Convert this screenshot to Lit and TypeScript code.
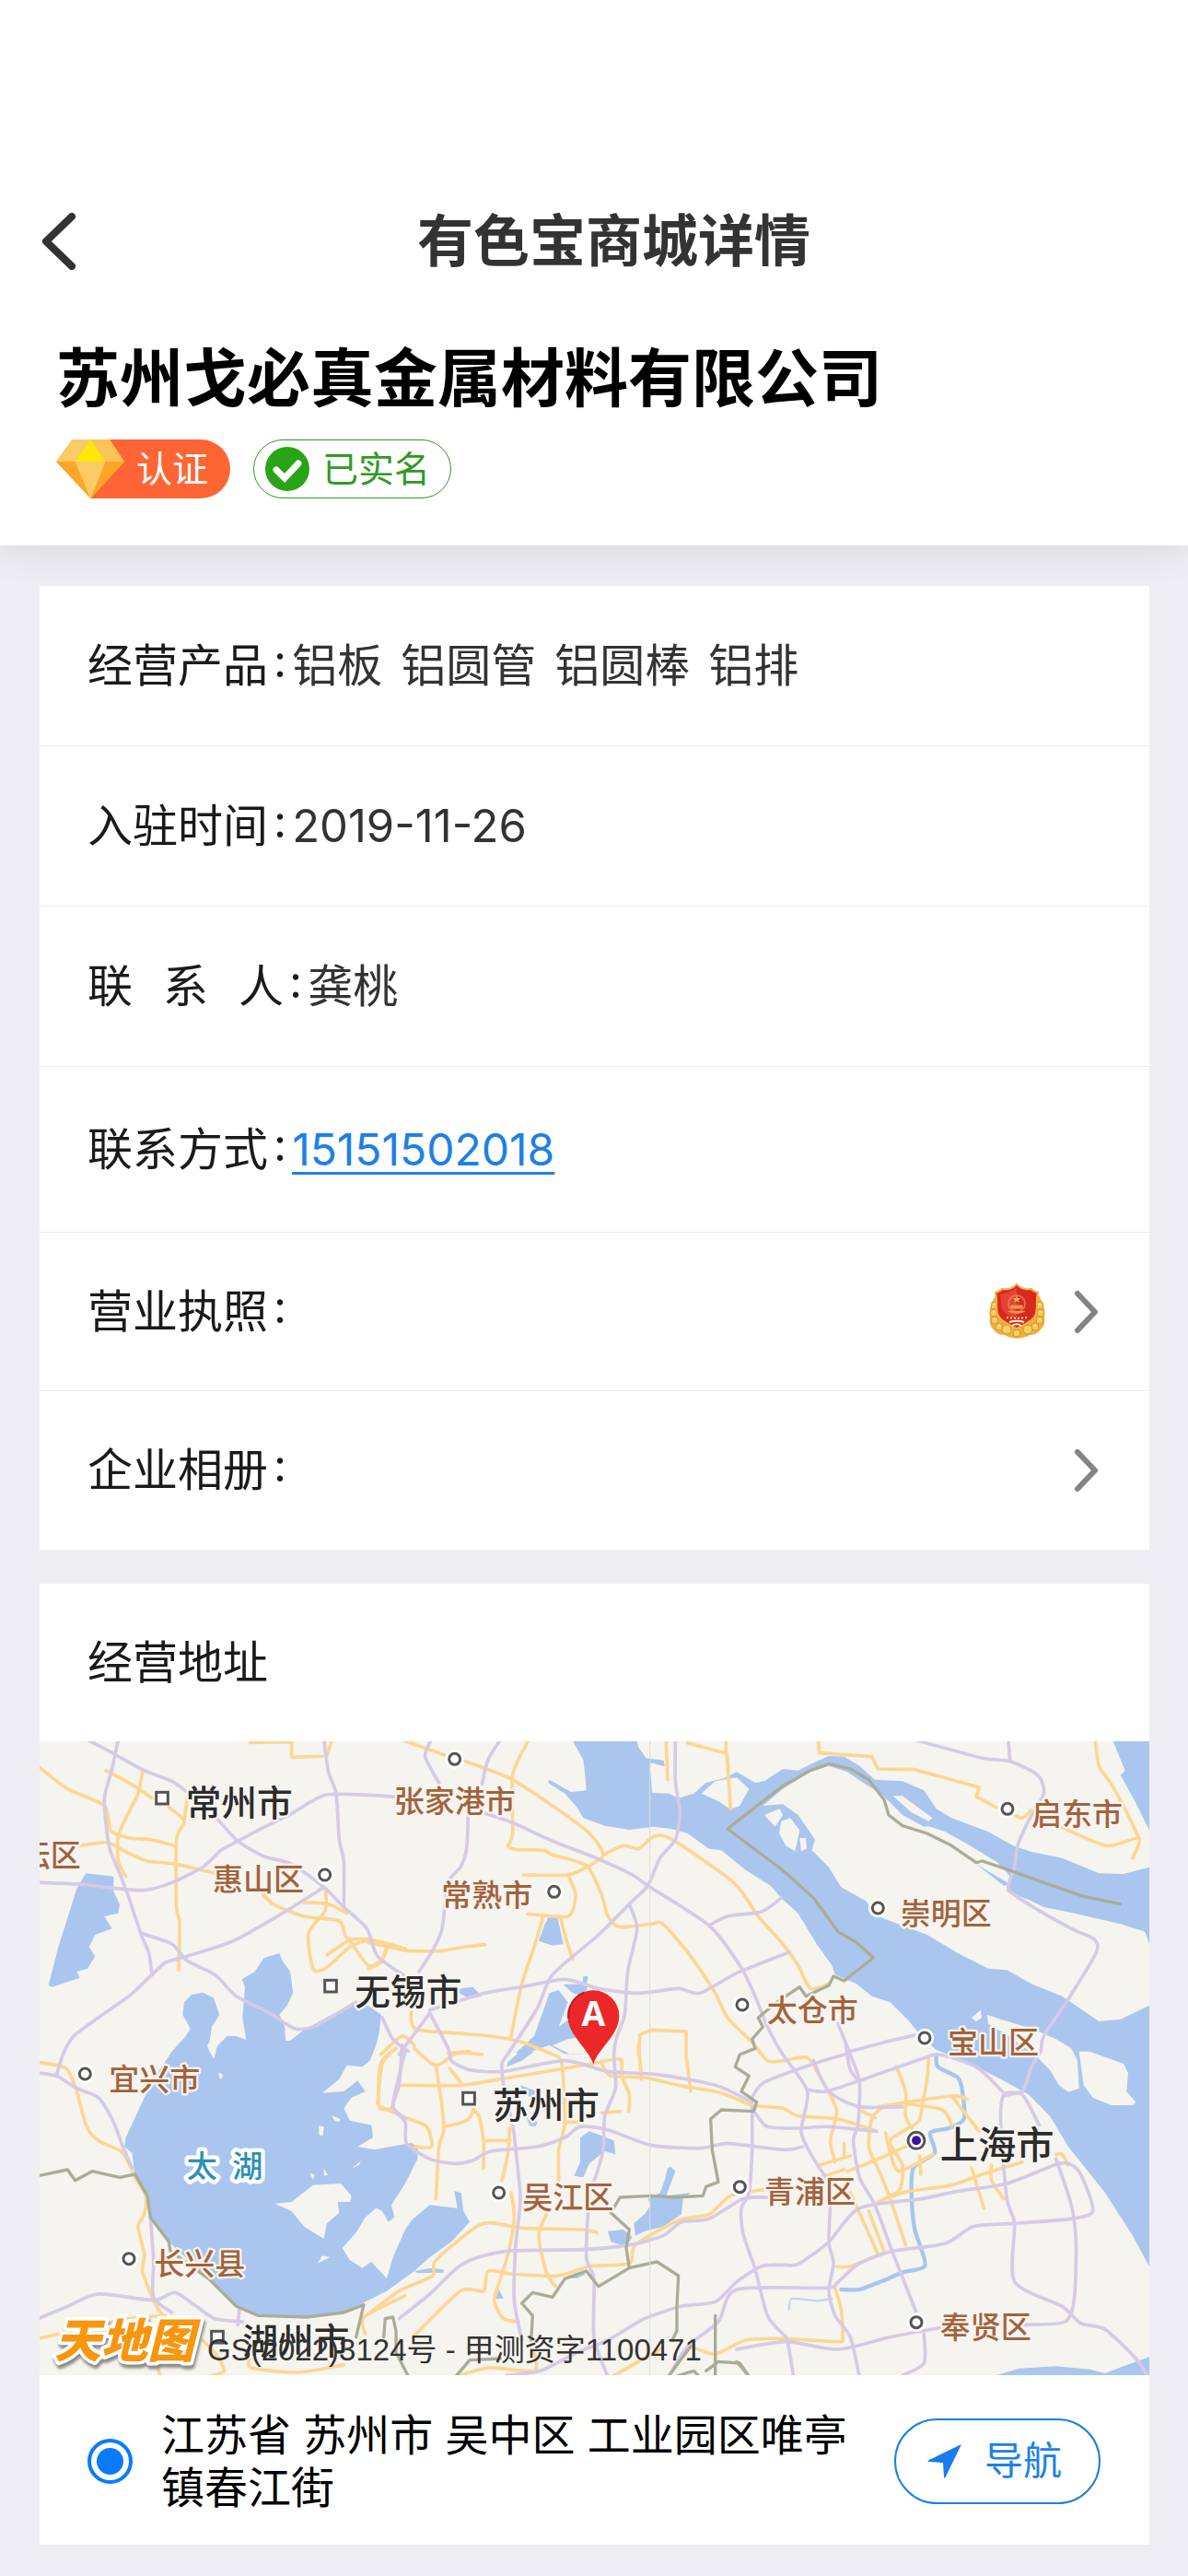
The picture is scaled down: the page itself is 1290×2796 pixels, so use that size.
import { LitElement, html, svg, css } from "lit";
import { customElement } from "lit/decorators.js";

/* ---------- map geometry ---------- */

// The map is stored in six sheets; each sheet has its own origin in the
// 3615 x 2064 drawing space. A letter in a line switches to that sheet.
const SHEETS: Record<string, [number, number]> = {
  a: [-9, -30],
  b: [1071, -30],
  c: [2271, -30],
  d: [-9, 990],
  e: [1071, 990],
  f: [2271, 990],
};

type Point = [number, number];

function parse(line: string): Point[] {
  let origin = SHEETS.a;
  const points: Point[] = [];
  for (const token of line.trim().split(/\s+/)) {
    if (SHEETS[token]) {
      origin = SHEETS[token];
    } else {
      const [x, y] = token.split(",").map(Number);
      points.push([x + origin[0], y + origin[1]]);
    }
  }
  return points;
}

function straight(line: string, close = false): string {
  return "M" + parse(line).map((p) => p.join(" ")).join("L") + (close ? "Z" : "");
}

function curve(line: string): string {
  const p = parse(line);
  let d = `M${p[0][0]} ${p[0][1]}`;
  for (let i = 0; i < p.length - 1; i++) {
    const a = p[i - 1] ?? p[i];
    const b = p[i];
    const c = p[i + 1];
    const e = p[i + 2] ?? c;
    const k = 8;
    d += `C${b[0] + (c[0] - a[0]) / k} ${b[1] + (c[1] - a[1]) / k} ${c[0] - (e[0] - b[0]) / k} ${c[1] - (e[1] - b[1]) / k} ${c[0]} ${c[1]}`;
  }
  return d;
}

const WATER = [
  `d 290,300 350,170 400,80 440,20 a 485,990 500,965 475,920 480,880 505,855 540,848 575,865 595,920 570,960 562,1010 d 555,0 562,20 578,45 585,10 a 590,1020 620,990 650,990 682,1002 670,930 678,830 668,805 710,780 740,735 790,720 800,745 825,780 835,850 815,890 790,920 808,960 810,1005 825,1005 870,970 980,910 1030,880 1070,885 1122,920 1115,980 1105,1020 d 1085,50 1060,70 1010,65 985,110 930,155 1000,150 1045,115 1070,150 1025,170 1000,205 1020,245 1090,260 1095,300 1045,330 1100,340 e 70,330 140,318 162,330 160,370 120,450 75,520 85,560 65,575 45,540 25,530 -10,560 -40,610 -85,660 -60,700 -20,725 10,705 60,760 80,690 120,600 140,570 200,520 290,530 280,475 302,480 310,540 330,575 270,640 200,690 150,735 60,800 0,830 d 1000,870 880,885 720,880 650,850 560,760 430,640 365,550 355,490 320,430 310,350 285,330`,
  "a 160,460 250,470 250,520 270,560 265,590 220,600 245,640 190,660 170,700 190,730 165,770 130,780 140,800 50,830 38,825 70,700 130,510",
  "b 300,835 340,830 370,860 330,868 295,850",
  "b 590,598 615,598 635,690 600,695 555,680 575,625",
  "b 590,850 620,840 650,880 620,960 660,930 700,990 650,1000 600,1020 660,1050 e 720,30 640,28 590,0 b 560,1030 500,1050 480,1045 540,990",
  "b 635,822 720,820 700,860 665,850",
  "b 700,795 715,795 710,830 698,820",
  "e 455,55 500,15 540,20 500,50 450,70",
  "e 690,300 720,280 800,310 805,355 770,345 720,385 700,430 670,425 690,380",
  "e 975,400 985,395 1000,410 985,450 970,490 1050,480 1025,500 1020,550 960,590 900,605 870,620 865,580 900,550 920,520 910,500 950,480 965,440",
  "e 780,605 830,600 860,625 840,655 790,640",
  "e 640,760 680,740 710,745 680,758",
  "e 425,795 440,825 415,825",
  "e 150,735 200,726 245,730 245,740 160,742",
  "e 495,130 550,150 530,170 505,155",
  "e 515,235 552,250 545,265 525,262",
  `b 665,28 700,90 705,130 710,190 660,195 590,155 585,165 640,200 680,245 700,280 770,305 850,318 930,308 985,315 1040,330 1110,380 1150,385 1230,450 1310,500 1345,540 c 200,590 260,690 310,760 320,790 390,820 440,860 500,880 560,940 600,990 650,1035 f 690,30 760,60 860,110 950,160 1020,230 1080,330 1200,480 1290,620 1344,720 c 1344,440 1260,462 1180,460 1060,410 960,390 900,370 820,325 700,280 650,250 610,190 540,160 450,155 400,110 350,80 300,78 250,100 200,125 150,120 90,160 60,165 0,130 b 1160,150 1100,165 1060,200 1010,215 980,200 925,198 918,120 920,100 965,112 962,92 905,85 880,50 875,28`,
  "c 1225,28 1265,125 1250,140 1300,230 1344,320 1344,28",
  "f 835,1078 920,1052 1040,1045 1150,1055 1200,1068 1260,1045 1344,1015 1344,1078",
];

const LAND = [
  "b 1085,200 1130,160 1200,148 1240,185 1210,240 1180,252 1140,225",
  `c 85,240 150,185 240,130 300,110 360,130 420,170 470,200 530,250 620,305 680,325 760,370 850,425 890,470 880,520 950,545 1000,570 1100,590 1250,625 1330,650 1344,690 1344,890 1250,935 1180,942 1060,860 960,820 880,775 820,770 720,720 620,660 540,630 460,600 420,550 340,505 300,440 245,385 255,350 200,270 150,235`,
  "c 90,270 140,250 150,270 125,308",
  "c 145,290 175,280 205,320 190,388 160,370 138,330",
  "c 205,345 225,345 228,380 210,388",
  "c 765,930 795,905 798,930 780,942",
  "c 815,920 860,935 960,965 1040,1000 1090,1030 f 1110,50 1115,140 1080,152 1050,130 1020,80 980,40 c 900,1000 820,950",
  "f 1115,20 1150,20 1260,60 1275,90 1270,150 1300,185 1290,195 1220,195 1160,170 1130,130",
  "d 775,515 830,510 900,455 990,450 1025,490 1020,510 980,510 985,545 945,580 935,630 870,590 830,540",
  "d 915,710 930,685 955,690 935,700",
  "d 960,228 988,240 985,250 970,245",
  "d 918,262 935,265 932,295 920,292",
  "d 1025,402 1055,376 1050,390",
  "d 592,88 606,95 602,110 594,105",
  "d 890,418 905,420 900,438",
  "d 935,402 948,422 935,425",
];

const CHANNELS = [
  "c 475,205 530,235 620,292 660,300 610,308 540,270",
  "c 780,430 890,495 870,500",
];
const SANDBARS = ["c 508,208 540,208 637,280 625,290 570,262"];

const MOTORWAYS = [
  "a 165,25 250,70 350,125 440,160 490,195",
  "a 590,285 655,355 740,405 830,430 935,505 1000,570 1075,640 1110,730 1200,795",
  "a 265,25 245,120 220,220 235,370 270,460 300,540 340,660 365,720 375,790",
  "a 5,490 130,495 250,508 350,515 440,490 540,440 600,385 655,355 720,320 830,265 940,205 1080,205 b 100,212",
  "a 935,25 950,130 975,200 985,350 1000,420 1000,570",
  "a 935,505 800,590 640,680 490,730 420,750 375,790 300,860 200,930 120,990 85,1050 d 65,95",
  "a 340,655 440,690 490,745 580,790 650,860 750,910 840,965 910,955 1040,880",
  "b 45,930 80,1000 130,1040",
  "b 205,25 185,80 230,165",
  "b 430,25 390,90 370,170",
  "b 370,262 470,295 600,355 730,405 860,465 910,500 1110,630 1210,760 1260,860 1300,960 1350,1050 f 230,150 210,280 245,360 290,430",
  "b 325,270 320,380 300,440 260,490 240,640 210,710 165,780",
  "b 1000,25 1000,160 1015,260 1000,350 950,410 910,500 850,560 750,660 600,790 550,900 460,1040 e 435,60 440,130",
  "b 850,560 875,640 845,780 835,920 810,990 800,1050 e 805,140 770,230 765,340 740,430 720,490 710,690 735,760 735,950 780,1080",
  "b 200,905 380,850 500,830 640,805 750,835 880,850 1010,835 1080,850 1200,785 1350,725 c 170,715",
  "b 1110,630 1170,600 1280,585 1345,540",
  "b 200,915 260,1030 e 270,50 330,80 440,85 640,50 780,85 940,95 1130,130 1250,185",
  "b 100,1050 200,915",
  "c 590,28 800,85 890,95 980,140 1000,200 950,290 915,370 905,440 885,510 950,560 1090,640 1165,675 1170,720 1080,870 1000,990 f 990,20 960,70 930,150 870,160 860,260 880,500 905,580 905,770 1060,850 1120,905 1200,925 1300,1020 1340,1080",
  "c 885,25 890,95",
  "c 330,950 370,1050 400,1140 f 395,260 380,310 400,430 450,520 510,680 585,870",
  "c 370,1040 480,1010 590,985",
  "f 355,0 370,80 400,120",
  "d 5,90 65,100 130,140 200,170 250,250 280,330 310,400",
  "d 370,560 380,700 380,820 440,870",
  "d 5,890 100,850 200,810 380,830 450,805 520,850 580,890 670,900",
  "d 1190,0 1180,130 1160,200 1200,240",
  "e 120,20 100,100 80,200 120,250 125,320 200,370 280,385 340,375 400,345 550,330 640,300 690,265 780,275 920,325 1080,335 1170,320 1350,340 f 215,330",
  "e 440,130 470,260 480,340 495,500 480,650 475,830 500,960",
  "e 100,890 200,810 310,710 450,670 700,665 850,650 960,620 1020,575 1110,565 1220,500 1300,495",
  "e 1250,200 1250,340 1240,480 1215,530 1220,610 1260,730 1300,880 1350,940 f 165,960 185,1080",
  "e 450,1075 560,1060 680,1000 780,960 900,890 1020,850 1130,835 1200,770 1280,720 1350,715 f 200,712 300,640 400,530 600,500 720,475 880,450 1050,385 1100,395 1130,440 1160,540 1090,565 900,580 770,590 680,645 510,670 400,710 330,770 290,790 e 1200,795 1140,900 1040,980 980,1075",
  "f 305,520 300,640 315,710 300,800 320,880 370,950 400,1080",
  "f 1040,370 1090,520 1105,640 1100,820 1070,900 940,910",
  "f 0,990 160,965 330,990 500,950 660,920",
  "f 610,940 610,1035 540,1075",
  "f 50,170 90,120 250,60 350,30",
  "f 60,220 100,265 200,270 300,265 455,280",
  "f 230,145 290,150 400,115 600,45 660,30 780,70 865,150",
  "f 250,50 300,150 400,200 540,200",
  "f 870,165 930,160 985,260",
  "d 660,860 655,910",
];

const ROADS = [
  "a 5,112 100,185 220,240 240,320 300,345 370,350 450,370",
  "a 225,125 300,165 375,215",
  "a 345,125 330,200 290,280 265,340 265,420 290,470",
  "a 430,245 480,290 455,350 455,570 465,620 462,775",
  "a 490,215 480,290",
  "a 140,370 230,360 290,390 360,420 455,430 580,460",
  "a 730,520 770,560 870,600 985,615 1010,670 1085,675 1200,705",
  "a 940,510 940,580 885,655 900,770 940,770 1020,700 1085,675",
  "a 945,725 1020,675",
  "a 1020,680 1080,760 1125,740 1140,705",
  "a 870,555 950,560 1010,590",
  "b 0,685 70,700 130,712 240,712 310,700 380,692",
  "b 60,700 40,750 0,770",
  "b 120,30 250,75",
  "b 315,95 460,150 600,240 720,330 765,400 710,440 650,465 505,465",
  "b 520,30 470,140 470,330 455,370 480,382 570,385 600,400 710,435 760,530 780,600 820,635 920,625 960,625 1050,730 1130,850 1170,930 1250,1010 e 1300,50 1350,50 f 230,40 270,100 325,210 305,310 320,380",
  "b 765,400 830,370 880,380 930,340 990,350 1190,490 1270,600 1350,690 c 200,760 240,835 300,820",
  "b 650,465 675,530 650,600 520,592",
  "b 570,600 540,700 500,820 465,990",
  "b 625,600 640,660 665,740",
  "b 140,900 140,940 160,970 280,980 400,990 500,1010 600,1050 e 630,60 640,250 620,340 620,440",
  "b 40,1050 110,990 150,1020",
  "b 260,1045 330,1040",
  "c 905,270 930,280 960,255",
  "c 1060,310 1205,370 1310,345 1290,410",
  "c 1168,28 1180,110 1220,170 1270,260 1310,345",
  "d 5,55 95,75 130,150 160,260 200,310 280,350 320,430 355,490 350,550 330,590 350,680 345,740 390,850 430,900",
  "d 5,955 180,915 300,890 420,880",
  "d 1170,10 1120,60 1115,200 1160,205",
  "d 540,960 580,1000 610,1060 570,1075",
  "d 1200,815 1065,885 1070,940",
  "d 380,960 400,1075",
  "d 690,1020 700,1050 850,1065 1000,1040",
  "e 370,30 290,25 220,65 150,10",
  "e 30,190 45,60 90,10",
  "e 220,65 240,200 245,280 230,330 220,500",
  "e 110,130 300,130 430,110 640,75 730,60",
  "e 265,75 300,120",
  "e 40,200 120,235 190,265 205,330 150,330",
  "e 250,265 320,245 345,210",
  "e 340,210 360,230 375,310 375,400",
  "e 375,310 460,310",
  "e 460,270 455,350 435,440",
  "e 650,250 700,250",
  "e 465,480 475,560 455,680 430,760 410,830 440,890 490,900",
  "e 0,875 100,800 210,750 220,700 370,582 500,595 700,600 745,610",
  "e 150,945 300,800 375,800 390,735 470,745 620,750 720,720 850,710 870,650 1010,570 1110,550 1180,490 1290,470",
  "e 580,550 555,620 580,740 610,785",
  "e 730,60 820,45 825,100 850,160 848,215",
  "e 880,0 890,110",
  "e 760,60 790,100 900,105 1010,130 1150,155 1250,195 1350,205 f 200,230 330,240 455,280",
  "e 760,220 820,215",
  "e 285,1080 390,1050 540,1060 540,1000",
  "e 800,1075 950,990",
  "e 1050,980 1130,1005 1230,960 1350,955 f 330,965 345,950 340,860 320,790",
  "f 520,70 550,150 550,230 570,270",
  "f 625,40 620,110 605,190 590,250 500,310 540,390 530,470 460,510",
  "f 460,200 700,165 750,175",
  "f 550,190 670,210 700,260",
  "f 700,165 790,280",
  "f 475,200 440,240 430,330 460,400 500,500 550,650",
  "f 410,215 450,235",
  "f 270,390 370,360",
  "f 270,430 350,405",
  "f 360,410 450,375 560,325",
  "f 485,285 500,350 530,410 640,355",
  "f 480,500 560,475 700,455 800,420 930,380",
  "f 765,400 805,530",
  "f 830,390 830,440 870,500",
  "f 370,480 460,680",
  "f 430,540 480,670",
  "f 325,720 370,720 480,675",
  "f 350,320 350,360",
  "f 1040,355 1060,355 1080,390",
  "f 595,360 600,420",
];

const ANGLED_ROADS = [
  "a 695,34 830,32 830,82 945,78 960,30",
  "b 970,28 975,155",
  "b 1040,35 1165,70 1165,28",
  "b 1168,70 1180,250",
  "b 880,1050 885,985 920,970 1035,975 1035,1050 e 1050,150",
  "c 265,28 270,68 440,80 460,120 580,122 790,180 780,210 845,245",
];

const BORDERS = [
  "c 1250,560 1130,535 1000,490 860,440 800,420 780,425 700,370 620,330 540,305 495,270 480,220 430,155 370,120 300,103 240,125 150,175 60,245 b 1170,315 1230,360 1350,450 c 250,540 330,650 390,685 445,735 350,810 315,795 300,825 225,860 205,830 130,880 70,930 85,960 50,1000 60,1030 e 1210,30 1195,70 1240,100 1215,150 1265,185 1255,215 1150,210 1115,240 1120,340 1140,445 1100,460 1090,490 1000,495 920,490 820,495 790,545 850,600 840,660 850,725 750,785 710,735 640,760 600,820 535,805 500,840 535,880 530,960",
  "e 850,725 940,705 1010,750 1005,850 1005,930 990,960",
  "e 980,1075 1020,1020 1050,980",
  "e 1010,1075 1060,1060 1075,1075",
  "e 285,1078 330,1025 430,1020",
  "e 50,950 55,890 80,885 90,930 90,1000 130,1078",
  "e 1130,880 1130,1078",
  "e 1100,1060 1140,1030 1210,1035 1240,1078",
  "f 0,1030 40,1078",
  "d 5,425 100,405 125,440 180,410 270,430 320,420 360,490 370,560 430,640 435,670 560,760 650,850 720,880 880,885 1000,870 1065,845 1040,950",
];

const RIVERS = [
  "f 650,30 655,70 720,105 735,150 740,240 690,270 630,285 645,350 575,400 570,500 580,600 600,660 612,720 540,740 480,765 400,795 340,795",
];
const STREAMS = ["f 310,825 260,832 180,825 170,860"];

interface Place {
  at: string;
  name: string;
}

const CITIES: Place[] = [
  { at: "a 485,230", name: "常州市" },
  { at: "a 1036,845", name: "无锡市" },
  { at: "e 405,193", name: "苏州市" },
  { at: "d 670,962", name: "湖州市" },
];

const CAPITALS: Place[] = [{ at: "f 662,323", name: "上海市" }];

const DISTRICTS: Place[] = [
  { at: "b 83,222", name: "张家港市" },
  { at: "b 238,530", name: "常熟市" },
  { at: "a 573,478", name: "惠山区" },
  { at: "a -55,400", name: "坛区" },
  { at: "c 960,265", name: "启东市" },
  { at: "c 533,588", name: "崇明区" },
  { at: "c 98,903", name: "太仓市" },
  { at: "c 687,1008", name: "宝山区" },
  { at: "d 235,108", name: "宜兴市" },
  { at: "d 382,708", name: "长兴县" },
  { at: "e 502,493", name: "吴江区" },
  { at: "f 90,476", name: "青浦区" },
  { at: "f 662,916", name: "奉贤区" },
];

const CITY_DOTS = ["a 408,215", "a 957,827", "e 327,173", "d 588,950"];
const DISTRICT_DOTS = [
  "a 938,465",
  "b 281,88",
  "b 605,520",
  "b 1218,888",
  "c 882,250",
  "c 460,573",
  "c 612,996",
  "d 157,93",
  "d 300,695",
  "e 425,480",
  "e 1210,461",
  "f 585,902",
];

@customElement("area-map")
export class AreaMap extends LitElement {
  static styles = css`
    :host {
      display: block;
      position: relative;
      overflow: hidden;
      background: #f5f4ef;
    }
    .sheet {
      display: block;
      width: 100%;
      height: auto;
    }
    .water {
      fill: #aac6ee;
    }
    .land {
      fill: #f5f4ef;
    }
    .line {
      fill: none;
      stroke-linecap: round;
      stroke-linejoin: round;
    }
    .motorway {
      stroke: #d6cae6;
      stroke-width: 11;
    }
    .road {
      stroke: #fdd692;
      stroke-width: 11;
    }
    .border {
      stroke: #a9ad98;
      stroke-width: 10;
    }
    .river {
      stroke: #a5c6ef;
      stroke-width: 13;
    }
    .stream {
      stroke: #bcd9ee;
      stroke-width: 7;
    }
    .seam {
      stroke: #dcdcda;
      stroke-width: 3;
    }
    .city,
    .capital-name,
    .district,
    .lake {
      font-family: "Noto Sans CJK SC", sans-serif;
      font-weight: 500;
      stroke-linejoin: round;
      paint-order: stroke;
      stroke: #f5f4ef;
      stroke-width: 14;
    }
    .city {
      font-size: 116px;
      fill: #2b2b2b;
    }
    .capital-name {
      font-size: 124px;
      fill: #2b2b2b;
    }
    .district {
      font-size: 99px;
      fill: #a3623c;
    }
    .lake {
      font-size: 99px;
      fill: #2e8fb5;
      stroke: #fff;
      stroke-width: 26;
    }
    .dot {
      fill: #fff;
      stroke: #555;
      stroke-width: 9;
    }
    .halo {
      fill: #fff;
    }
    .capital {
      fill: #3a149a;
    }
    .pin {
      fill: #ec2727;
    }
    .pin-shade {
      fill: none;
      stroke: #b81d1d;
      stroke-width: 6;
    }
    .pin-letter {
      font: 700 112px "Open Sans", sans-serif;
      fill: #fff;
      text-anchor: middle;
    }
    .brand {
      font: italic 900 152px "Noto Sans CJK SC", sans-serif;
      stroke-linejoin: round;
      paint-order: stroke;
      stroke-width: 22;
      fill: #f7960f;
      stroke: #fff;
      filter: drop-shadow(4px 12px 4px #8a8a8a);
    }
    .notice {
      position: absolute;
      left: 182px;
      bottom: 7px;
      font: 33px/40px "Liberation Sans", "Noto Sans CJK SC", sans-serif;
      color: #333;
      white-space: nowrap;
    }
  `;

  private label(place: Place, kind: string, size: number) {
    const [[x, y]] = parse(place.at);
    return svg`<text class=${kind} x=${x} y=${y + Math.round(size * 0.38)}>${place.name}</text>`;
  }

  render() {
    const [[sx, sy]] = parse("f 585,310");
    const [[px, py]] = parse("b 733,925");
    const [[lx, ly]] = parse("d 488,430");
    return html`
      <svg class="sheet" viewBox="0 0 3615 2064" role="img" aria-label="苏州市周边地图">
        ${WATER.map((d) => svg`<path class="water" d=${straight(d, true)} />`)}
        ${LAND.map((d) => svg`<path class="land" d=${straight(d, true)} />`)}
        ${CHANNELS.map((d) => svg`<path class="water" d=${straight(d, true)} />`)}
        ${SANDBARS.map((d) => svg`<path class="land" d=${straight(d, true)} />`)}
        ${STREAMS.map((d) => svg`<path class="line stream" d=${curve(d)} />`)}
        ${RIVERS.map((d) => svg`<path class="line river" d=${curve(d)} />`)}
        ${ROADS.map((d) => svg`<path class="line road" d=${curve(d)} />`)}
        ${ANGLED_ROADS.map((d) => svg`<path class="line road" d=${straight(d)} />`)}
        ${MOTORWAYS.map((d) => svg`<path class="line motorway" d=${curve(d)} />`)}
        ${BORDERS.map((d) => svg`<path class="line border" d=${straight(d)} />`)}
        <path class="seam" d="M1988 0V2064" />
        ${DISTRICT_DOTS.map((d) => {
          const [[x, y]] = parse(d);
          return svg`<circle class="halo" cx=${x} cy=${y} r="31" /><circle class="dot" cx=${x} cy=${y} r="18" />`;
        })}
        ${CITY_DOTS.map((d) => {
          const [[x, y]] = parse(d);
          return svg`<rect class="dot" x=${x - 19} y=${y - 19} width="38" height="38" />`;
        })}
        <circle class="halo" cx=${sx} cy=${sy} r="36" />
        <circle class="dot" cx=${sx} cy=${sy} r="27" />
        <circle class="capital" cx=${sx} cy=${sy} r="15" />
        ${DISTRICTS.map((p) => this.label(p, "district", 99))}
        ${CITIES.map((p) => this.label(p, "city", 116))}
        ${CAPITALS.map((p) => this.label(p, "capital-name", 124))}
        <text class="lake" x=${lx} y=${ly}>太&#8194;湖</text>
        <path
          class="pin"
          d="M${px} ${py + 157}C${px - 12} ${py + 110} ${px - 84} ${py + 62} ${px - 84} ${py}a84 84 0 0 1 168 0C${px + 84} ${py + 62} ${px + 12} ${py + 110} ${px} ${py + 157}Z"
        />
        <path class="pin-shade" d="M${px - 81} ${py + 8}A81 81 0 0 1 ${px - 30} ${py - 77}" />
        <text class="pin-letter" x=${px} y=${py + 32}>A</text>
        <text class="brand" x="48" y="2008">天地图</text>
      </svg>
      <span class="notice">GS(2022)3124号 - 甲测资字1100471</span>
    `;
  }
}

/* ---------- icons ---------- */

const backIcon = svg`<path d="M38 4 10 31l28 27" fill="none" stroke="#333" stroke-width="8" stroke-linecap="round" stroke-linejoin="round" />`;

const chevron = html`<svg class="chevron" viewBox="0 0 28 48" aria-hidden="true">
  <path d="M4 4 23 24 4 44" fill="none" stroke="#848484" stroke-width="6" stroke-linecap="round" stroke-linejoin="round" />
</svg>`;

const leaves = [
  [7, 24], [6, 32], [7, 40], [12, 47],
  [56, 24], [57, 32], [56, 40], [51, 47],
];

const emblem = html`<svg class="emblem" viewBox="0 0 63 61" aria-hidden="true">
  <path d="M8 13C5 19 0 27 2 37c-1 5 0 10 4 13 3 5 8 6 12 6 8 5 19 5 27 0 4 0 9-1 12-6 4-3 5-8 4-13 2-10-3-18-6-24Z" fill="#edb23c" />
  ${leaves.map(
    ([x, y]) => svg`<circle cx=${x} cy=${y} r="4" fill="#f6c95c" stroke="#d9952b" stroke-width="1" /><circle cx=${x} cy=${y - 1} r="1" fill="#fdeaa6" />`,
  )}
  <circle cx="20" cy="50" r="5" fill="#f8d065" stroke="#d48e2a" />
  <circle cx="43" cy="50" r="5" fill="#f8d065" stroke="#d48e2a" />
  <circle cx="31" cy="54" r="4" fill="#f8d065" stroke="#d48e2a" />
  <path d="M31 1c4 5 11 6 16 5 1 2 4 3 7 4-3 9 1 17-3 25-3 7-12 9-20 14-8-5-17-7-20-14-4-8 0-16-3-25 3-1 6-2 7-4 5 1 12 0 16-5Z" fill="#d9281f" stroke="#eeb04a" stroke-width="2" />
  <path d="M13 12c6-1 11-3 18-7v34c-8-3-14-6-16-12Z" fill="#ef5844" opacity=".55" />
  <circle cx="31" cy="22" r="9" fill="none" stroke="#ef8d57" stroke-width="2" opacity=".7" />
  <path d="m31 13 1 3h3l-2 2 1 3-3-2-3 2 1-3-2-2h3Z" fill="#f6b35c" />
  <path d="M25 24h12v3H25Zm-3 6c5 3 13 3 18 0" fill="#f19a58" stroke="#f19a58" stroke-width="1" />
  <path d="M20 37c7 1 15 1 22 0" fill="none" stroke="#f8d5a0" stroke-width="2" stroke-dasharray="2 2" />
  <path d="M23 42c6-2 10-2 16 0M26 46c3-2 7-2 10 0" fill="none" stroke="#fff3c8" stroke-width="2" />
</svg>`;

const gem = html`<svg class="gem" viewBox="0 0 222 192" aria-hidden="true">
  <path d="M52 0h122l48 72-110 120L0 72Z" fill="#fdc75b" />
  <path d="M0 72h62l50 120Z" fill="#fda52b" />
  <path d="M222 72h-62l-48 120Z" fill="#fda52b" />
  <path d="M62 72h98l-48 120Z" fill="#fdca66" />
  <path d="M52 0h60L62 72H0Z" fill="#f9cb63" />
  <path d="M112 0h62l48 72h-62Z" fill="#fbc457" />
  <path d="m112 2 48 70H62Z" fill="#ffe800" />
</svg>`;

const tick = html`<svg class="tick" viewBox="0 0 48 48" aria-hidden="true">
  <circle cx="24" cy="24" r="24" fill="#28a515" />
  <path d="m12 25 9 9 15-16" fill="none" stroke="#fff" stroke-width="7" stroke-linecap="round" />
</svg>`;

/* ---------- page ---------- */

@customElement("app-root")
export class AppRoot extends LitElement {
  static styles = css`
    :host {
      display: block;
      min-height: 100vh;
      background: #eeedf3;
      color: #1a1a1a;
      font-family: Inter, "Noto Sans CJK SC", sans-serif;
    }
    * {
      box-sizing: border-box;
    }
    button {
      border: 0;
      padding: 0;
      background: none;
      font-family: inherit;
      color: inherit;
      cursor: pointer;
    }
    h1,
    h2,
    h3 {
      margin: 0;
    }
    .top {
      background: #fff;
      box-shadow: 0 4px 36px #d6d6de;
    }
    .bar {
      display: flex;
      align-items: center;
      height: 322px;
      padding: 202px 40px 0;
    }
    .back {
      display: flex;
      width: 43px;
      height: 62px;
    }
    .back svg {
      width: 43px;
      height: 62px;
    }
    .title {
      flex: 1;
      text-align: center;
      font-size: 61px;
      font-weight: 700;
      line-height: 80px;
      color: #333;
    }
    .company {
      display: flex;
      flex-direction: column;
      gap: 16px;
      padding: 39px 61px 51px;
    }
    .name {
      font-size: 69px;
      font-weight: 700;
      line-height: 100px;
      color: #000;
    }
    .badges {
      display: flex;
      gap: 25px;
    }
    .badge {
      display: flex;
      align-items: center;
      height: 64px;
      border-radius: 32px;
      font-size: 39px;
      line-height: 60px;
    }
    .certified {
      gap: 13px;
      padding-right: 24px;
      border-radius: 0 32px 32px 0;
      color: #fff;
      background: linear-gradient(90deg, transparent 38px, #ff6534 38px);
    }
    .gem {
      width: 74px;
      height: 64px;
    }
    .verified {
      gap: 14px;
      padding: 0 22px 0 12px;
      border: 1px solid #2c9a20;
      color: #2f9a24;
    }
    .tick {
      width: 48px;
      height: 48px;
    }
    .content {
      display: flex;
      flex-direction: column;
      gap: 37px;
      padding: 44px 42px 34px 43px;
    }
    .card {
      background: #fff;
    }
    .row {
      display: flex;
      align-items: center;
      width: 100%;
      min-height: 174px;
      padding: 0 54px 0 52px;
      border-bottom: 1px solid #ebebee;
      font-size: 49px;
      line-height: 60px;
      text-align: left;
    }
    .row.tall {
      min-height: 180px;
    }
    button.row {
      min-height: 172px;
    }
    .row:last-child {
      border-bottom: 0;
    }
    .label {
      display: flex;
    }
    .spread {
      gap: 33px;
    }
    .colon {
      padding: 0 6px;
      font-feature-settings: "case";
    }
    .value {
      display: flex;
      gap: 20px;
      color: #333;
    }
    .phone {
      font-size: 48px;
      color: #1e80e6;
      text-decoration: underline;
      text-decoration-thickness: 3px;
      text-underline-offset: 7px;
    }
    .tail {
      display: flex;
      align-items: center;
      gap: 30px;
      margin-left: auto;
    }
    .emblem {
      width: 63px;
      height: 61px;
    }
    .chevron {
      width: 28px;
      height: 48px;
    }
    .heading {
      padding: 56px 52px 55px;
      font-size: 49px;
      font-weight: 400;
      line-height: 60px;
    }
    .address {
      display: flex;
      align-items: center;
      gap: 31px;
      min-height: 184px;
      padding: 2px 53px 0 52px;
    }
    .pick {
      appearance: none;
      flex: none;
      width: 49px;
      height: 49px;
      margin: 0;
      border: 4px solid #0a7aff;
      border-radius: 50%;
      background: radial-gradient(circle, #0a7aff 14px, #fff 15px);
    }
    .street {
      flex: 1;
      font-size: 47px;
      line-height: 57px;
      color: #000;
    }
    .navigate {
      display: flex;
      flex: none;
      align-items: center;
      gap: 24px;
      width: 224px;
      height: 93px;
      padding-left: 34px;
      border: 2px solid #1e80e0;
      border-radius: 47px;
      font-size: 42px;
      line-height: 60px;
      color: #1e80e6;
    }
    .arrow {
      width: 38px;
      height: 38px;
    }
  `;

  private label(text: string) {
    return html`<span class="label">${text}<span class="colon">:</span></span>`;
  }

  render() {
    return html`
      <header class="top">
        <div class="bar">
          <button class="back" aria-label="返回">
            <svg viewBox="0 0 43 62" aria-hidden="true">${backIcon}</svg>
          </button>
          <h1 class="title">有色宝商城详情</h1>
        </div>
        <div class="company">
          <h2 class="name">苏州戈必真金属材料有限公司</h2>
          <div class="badges">
            <span class="badge certified">${gem}认证</span>
            <span class="badge verified">${tick}已实名</span>
          </div>
        </div>
      </header>
      <main class="content">
        <section class="card">
          <div class="row">
            ${this.label("经营产品")}
            <span class="value">
              ${["铝板", "铝圆管", "铝圆棒", "铝排"].map((item) => html`<span>${item}</span>`)}
            </span>
          </div>
          <div class="row">
            ${this.label("入驻时间")}
            <span class="value">2019-11-26</span>
          </div>
          <div class="row">
            <span class="label">
              <span class="label spread"><span>联</span><span>系</span><span>人</span></span>
              <span class="colon">:</span>
            </span>
            <span class="value">龚桃</span>
          </div>
          <div class="row tall">
            ${this.label("联系方式")}
            <a class="phone" href="tel:15151502018">15151502018</a>
          </div>
          <button class="row">
            ${this.label("营业执照")}
            <span class="tail">${emblem}${chevron}</span>
          </button>
          <button class="row">
            ${this.label("企业相册")}
            <span class="tail">${chevron}</span>
          </button>
        </section>
        <section class="card">
          <h3 class="heading">经营地址</h3>
          <area-map></area-map>
          <div class="address">
            <input class="pick" type="radio" id="site" name="site" checked />
            <label class="street" for="site">江苏省 苏州市 吴中区 工业园区唯亭镇春江街</label>
            <button class="navigate">
              <svg class="arrow" viewBox="0 0 38 38" aria-hidden="true">
                <path d="M37 1 20 36c-1 2-2 2-2 0l-1-15-15-1c-2 0-2-1 0-2Z" fill="#1a7af0" />
              </svg>
              导航
            </button>
          </div>
        </section>
      </main>
    `;
  }
}
